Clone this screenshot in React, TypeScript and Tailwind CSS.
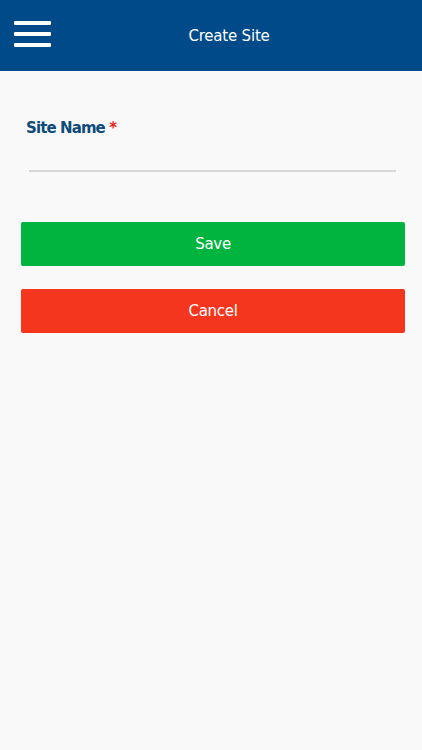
import React from "react";

export default function App() {
  return (
    <div className="min-h-[750px] w-full bg-[#f9f9f9]" style={{ fontFamily: '"DejaVu Sans", Verdana, sans-serif' }}>
      <header className="relative flex h-[71px] items-center justify-center bg-[#004a89]">
        <button className="absolute left-[14px] top-[21px] flex flex-col gap-[7px]">
          <span className="block h-[4px] w-[37px] rounded-[1px] bg-white" />
          <span className="block h-[4px] w-[37px] rounded-[1px] bg-white" />
          <span className="block h-[4px] w-[37px] rounded-[1px] bg-white" />
        </button>
        <h1 className="ml-[36px] mt-[1px] text-[15px] tracking-[-0.2px] text-white">Create Site</h1>
      </header>
      <main className="pl-[21px] pr-[17px]">
        <div className="pl-[5px] pt-[45px]">
          <label className="text-[15px] font-bold tracking-[-0.9px] text-[#0e4a7b]">
            Site Name <span className="text-[#f21c1c]">*</span>
          </label>
        </div>
        <div className="ml-[8px] mr-[9px] mt-[30px] h-[2px] bg-[#d8d8d8]" />
        <button className="mt-[50px] flex h-[44px] w-full items-center justify-center rounded-[2px] bg-[#00b43f] text-[15px] tracking-[-0.3px] text-white">
          Save
        </button>
        <button className="mt-[23px] flex h-[44px] w-full items-center justify-center rounded-[2px] bg-[#f4361f] text-[15px] tracking-[-0.3px] text-white">
          Cancel
        </button>
      </main>
    </div>
  );
}
